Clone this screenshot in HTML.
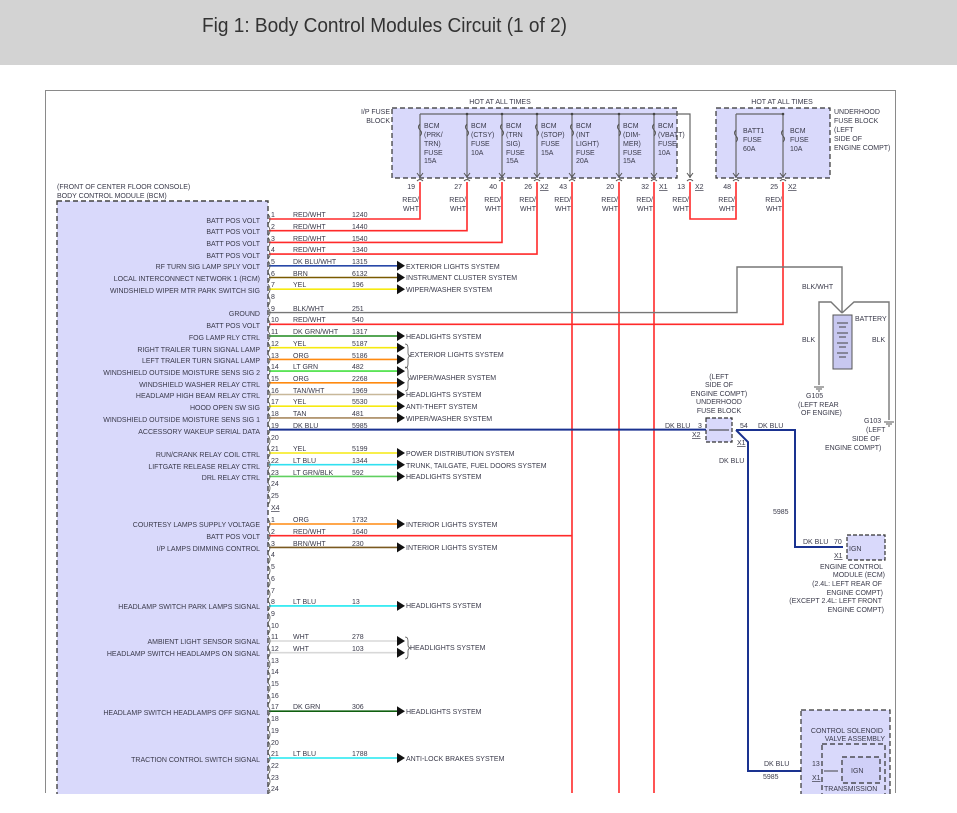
<!DOCTYPE html>
<html><head><meta charset="utf-8"><style>
html,body{margin:0;padding:0;background:#fff;width:957px;height:813px;overflow:hidden}
svg{display:block}
text{font-family:"Liberation Sans",sans-serif;font-size:7px;fill:#3a3a4a}
.l{text-anchor:end}
</style></head><body>
<svg width="957" height="813" viewBox="0 0 957 813" xmlns="http://www.w3.org/2000/svg">
<rect x="0" y="0" width="957" height="65" fill="#d3d3d3"/>
<text x="202" y="32" textLength="365" lengthAdjust="spacingAndGlyphs" style="font-size:20.5px;fill:#333">Fig 1: Body Control Modules Circuit (1 of 2)</text>
<path d="M45.5,793 V90.5 H895.5 V793" fill="none" stroke="#8a8a8a" stroke-width="1"/>
<rect x="57" y="201" width="211" height="595" fill="#d9d9fb" stroke="#444" stroke-width="1.4" stroke-dasharray="5,3"/>
<text x="57" y="189">(FRONT OF CENTER FLOOR CONSOLE)</text>
<text x="57" y="198">BODY CONTROL MODULE (BCM)</text>
<rect x="392" y="108" width="285" height="70" fill="#d9d9fb" stroke="#333" stroke-width="1.2" stroke-dasharray="5,3"/>
<rect x="716" y="108" width="114" height="70" fill="#d9d9fb" stroke="#333" stroke-width="1.2" stroke-dasharray="5,3"/>
<text x="500" y="104" text-anchor="middle">HOT AT ALL TIMES</text>
<text x="782" y="104" text-anchor="middle">HOT AT ALL TIMES</text>
<text class="l" x="390" y="114">I/P FUSE</text><text class="l" x="390" y="123">BLOCK</text>
<text x="834" y="114">UNDERHOOD</text><text x="834" y="123">FUSE BLOCK</text><text x="834" y="132">(LEFT</text><text x="834" y="141">SIDE OF</text><text x="834" y="150">ENGINE COMPT)</text>
<g fill="none" stroke="#666" stroke-width="1.2">
<path d="M420,114 H690 V178"/><path d="M420,114V178M467,114V178M502,114V178M537,114V178M572,114V178M619,114V178M654,114V178"/>
<path d="M736,114 H783 M736,114V178 M783,114V178"/>
</g>
<g fill="#444"><circle cx="467" cy="114" r="1.3"/><circle cx="502" cy="114" r="1.3"/><circle cx="537" cy="114" r="1.3"/><circle cx="572" cy="114" r="1.3"/><circle cx="619" cy="114" r="1.3"/><circle cx="654" cy="114" r="1.3"/><circle cx="783" cy="114" r="1.3"/></g>
<g fill="none" stroke="#555" stroke-width="1">
<path d="M420,124 q-3,3 0,6 q3,3 0,6 M467,124 q-3,3 0,6 q3,3 0,6 M502,124 q-3,3 0,6 q3,3 0,6 M537,124 q-3,3 0,6 q3,3 0,6 M572,124 q-3,3 0,6 q3,3 0,6 M619,124 q-3,3 0,6 q3,3 0,6 M654,124 q-3,3 0,6 q3,3 0,6 M736,130 q-3,3 0,6 q3,3 0,6 M783,130 q-3,3 0,6 q3,3 0,6"/>
<path d="M417,173l3,4 3,-4M464,173l3,4 3,-4M499,173l3,4 3,-4M534,173l3,4 3,-4M569,173l3,4 3,-4M616,173l3,4 3,-4M651,173l3,4 3,-4M687,173l3,4 3,-4M733,173l3,4 3,-4M780,173l3,4 3,-4"/>
<path d="M417,181q3,-3 6,0M464,181q3,-3 6,0M499,181q3,-3 6,0M534,181q3,-3 6,0M569,181q3,-3 6,0M616,181q3,-3 6,0M651,181q3,-3 6,0M687,181q3,-3 6,0M733,181q3,-3 6,0M780,181q3,-3 6,0"/>
</g>
<g>
<text x="424" y="128">BCM</text><text x="424" y="137">(PRK/</text><text x="424" y="146">TRN)</text><text x="424" y="155">FUSE</text><text x="424" y="163">15A</text>
<text x="471" y="128">BCM</text><text x="471" y="137">(CTSY)</text><text x="471" y="146">FUSE</text><text x="471" y="155">10A</text>
<text x="506" y="128">BCM</text><text x="506" y="137">(TRN</text><text x="506" y="146">SIG)</text><text x="506" y="155">FUSE</text><text x="506" y="163">15A</text>
<text x="541" y="128">BCM</text><text x="541" y="137">(STOP)</text><text x="541" y="146">FUSE</text><text x="541" y="155">15A</text>
<text x="576" y="128">BCM</text><text x="576" y="137">(INT</text><text x="576" y="146">LIGHT)</text><text x="576" y="155">FUSE</text><text x="576" y="163">20A</text>
<text x="623" y="128">BCM</text><text x="623" y="137">(DIM-</text><text x="623" y="146">MER)</text><text x="623" y="155">FUSE</text><text x="623" y="163">15A</text>
<text x="658" y="128">BCM</text><text x="658" y="137">(VBATT)</text><text x="658" y="146">FUSE</text><text x="658" y="155">10A</text>
<text x="743" y="133">BATT1</text><text x="743" y="142">FUSE</text><text x="743" y="151">60A</text>
<text x="790" y="133">BCM</text><text x="790" y="142">FUSE</text><text x="790" y="151">10A</text>
</g>
<g>
<text class="l" x="415" y="189">19</text><text class="l" x="462" y="189">27</text><text class="l" x="497" y="189">40</text><text class="l" x="532" y="189">26</text><text class="l" x="567" y="189">43</text><text class="l" x="614" y="189">20</text><text class="l" x="649" y="189">32</text><text class="l" x="685" y="189">13</text><text class="l" x="731" y="189">48</text><text class="l" x="778" y="189">25</text>
</g>
<g><text x="540" y="189" text-decoration="underline">X2</text><text x="659" y="189" text-decoration="underline">X1</text><text x="695" y="189" text-decoration="underline">X2</text><text x="788" y="189" text-decoration="underline">X2</text></g>
<g>
<text class="l" x="419" y="202">RED/</text><text class="l" x="419" y="211">WHT</text>
<text class="l" x="466" y="202">RED/</text><text class="l" x="466" y="211">WHT</text>
<text class="l" x="501" y="202">RED/</text><text class="l" x="501" y="211">WHT</text>
<text class="l" x="536" y="202">RED/</text><text class="l" x="536" y="211">WHT</text>
<text class="l" x="571" y="202">RED/</text><text class="l" x="571" y="211">WHT</text>
<text class="l" x="618" y="202">RED/</text><text class="l" x="618" y="211">WHT</text>
<text class="l" x="653" y="202">RED/</text><text class="l" x="653" y="211">WHT</text>
<text class="l" x="689" y="202">RED/</text><text class="l" x="689" y="211">WHT</text>
<text class="l" x="735" y="202">RED/</text><text class="l" x="735" y="211">WHT</text>
<text class="l" x="782" y="202">RED/</text><text class="l" x="782" y="211">WHT</text>
</g>
<g fill="none" stroke="#ff2a2a" stroke-width="1.6">
<path d="M269,219 H420 V182"/><path d="M269,230.7 H467 V182"/><path d="M269,242.4 H502 V182"/><path d="M269,254.1 H537 V182"/>
<path d="M572,182 V793"/><path d="M619,182 V793"/><path d="M654,182 V793"/>
<path d="M690,182 V219 H736 V182"/><path d="M269,324.3 H783 V182"/>
<path d="M269,535.7 H572"/>
</g>
<g fill="none" stroke="#777" stroke-width="1.4">
<path d="M269,312.6 H737 V267 H842 V313"/>
<path d="M842,313 L831,302 H819 V385"/><path d="M842,313 L854,302 H889 V420"/>
</g>
<text x="802" y="289">BLK/WHT</text><text x="802" y="342">BLK</text><text x="872" y="342">BLK</text><text x="855" y="321">BATTERY</text>
<rect x="833" y="315" width="19" height="54" fill="#c8c8f0" stroke="#555" stroke-width="1"/>
<g stroke="#444" stroke-width="1"><path d="M837,323h11M839,327h7M837,333h11M839,337h7M837,343h11M839,347h7M837,353h11M839,357h7"/></g>
<path d="M814,387h10M816,389h6M818,391h2" stroke="#555"/><path d="M884,422h10M886,424h6M888,426h2" stroke="#555"/>
<text x="806" y="398">G105</text><text x="798" y="407">(LEFT REAR</text><text x="801" y="415">OF ENGINE)</text>
<text x="864" y="423">G103</text><text x="866" y="432">(LEFT</text><text x="852" y="441">SIDE OF</text><text x="825" y="450">ENGINE COMPT)</text>
<rect x="706" y="418" width="26" height="24" fill="#d9d9fb" stroke="#333" stroke-width="1.2" stroke-dasharray="4,2"/>
<path d="M709,430H729" stroke="#333"/>
<g text-anchor="middle"><text x="719" y="379">(LEFT</text><text x="719" y="387">SIDE OF</text><text x="719" y="396">ENGINE COMPT)</text><text x="719" y="404">UNDERHOOD</text><text x="719" y="413">FUSE BLOCK</text></g>
<g fill="none" stroke="#1a3290" stroke-width="2">
<path d="M269,429.6 H706"/><path d="M736,430 H795 V547 H843"/><path d="M736,430 L748,442 V771 H818"/>
</g>
<text x="665" y="428">DK BLU</text><text x="698" y="428">3</text><text x="692" y="437" text-decoration="underline">X2</text>
<text x="740" y="428">54</text><text x="758" y="428">DK BLU</text><text x="737" y="445" text-decoration="underline">X1</text>
<text x="719" y="463">DK BLU</text><text x="773" y="514">5985</text>
<rect x="847" y="535" width="38" height="25" fill="#d9d9fb" stroke="#333" stroke-width="1.2" stroke-dasharray="4,2"/>
<text x="803" y="544">DK BLU</text><text x="834" y="544">70</text><text x="834" y="558" text-decoration="underline">X1</text><text x="849" y="551">IGN</text>
<g><text class="l" x="883" y="569">ENGINE CONTROL</text><text class="l" x="885" y="577">MODULE (ECM)</text><text class="l" x="882" y="586">(2.4L: LEFT REAR OF</text><text class="l" x="883" y="595">ENGINE COMPT)</text><text class="l" x="882" y="603">(EXCEPT 2.4L: LEFT FRONT</text><text class="l" x="884" y="612">ENGINE COMPT)</text></g>
<rect x="801" y="710" width="89" height="90" fill="#d9d9fb" stroke="#333" stroke-width="1.2" stroke-dasharray="5,3"/>
<rect x="822" y="744" width="63" height="60" fill="#d9d9fb" stroke="#333" stroke-width="1.2" stroke-dasharray="5,3"/>
<rect x="842" y="757" width="38" height="26" fill="#d0d0f8" stroke="#333" stroke-width="1.2" stroke-dasharray="5,3"/>
<path d="M824,771 H838" stroke="#444"/>
<text class="l" x="883" y="733">CONTROL SOLENOID</text><text class="l" x="885" y="741">VALVE ASSEMBLY</text>
<text x="851" y="773">IGN</text><text x="812" y="766">13</text><text x="812" y="780" text-decoration="underline">X1</text>
<text x="764" y="766">DK BLU</text><text x="763" y="779">5985</text><text x="824" y="791">TRANSMISSION</text>
<g fill="none" stroke-width="1.6">
<path d="M269,265.8H398" stroke="#2848a8"/>
<path d="M269,277.5H398" stroke="#7a5a00"/>
<path d="M269,289.2H398" stroke="#f6ea10"/>
<path d="M269,336H398" stroke="#1f8a1f"/>
<path d="M269,347.7H398" stroke="#f6ea10"/>
<path d="M269,359.4H398" stroke="#ff8a10"/>
<path d="M269,371.1H398" stroke="#44e040"/>
<path d="M269,382.8H398" stroke="#ff8a10"/>
<path d="M269,394.5H398" stroke="#c8b89a"/>
<path d="M269,406.2H398" stroke="#f6ea10"/>
<path d="M269,417.9H398" stroke="#a88a60"/>
<path d="M269,453H398" stroke="#f6ea10"/>
<path d="M269,464.7H398" stroke="#30e0f0"/>
<path d="M269,476.4H398" stroke="#60d060"/>
<path d="M269,524H398" stroke="#ff8a10"/>
<path d="M269,547.4H398" stroke="#7a5a20"/>
<path d="M269,605.9H398" stroke="#20e8f0"/>
<path d="M269,641H398" stroke="#d8d8d8"/>
<path d="M269,652.7H398" stroke="#d8d8d8"/>
<path d="M269,711.2H398" stroke="#106010"/>
<path d="M269,758H398" stroke="#20e8f0"/>
</g>
<g fill="#111">
<path d="M397,260.8l8,5l-8,5z"/><path d="M397,272.5l8,5l-8,5z"/><path d="M397,284.2l8,5l-8,5z"/><path d="M397,331l8,5l-8,5z"/><path d="M397,342.7l8,5l-8,5z"/><path d="M397,354.4l8,5l-8,5z"/><path d="M397,366.1l8,5l-8,5z"/><path d="M397,377.8l8,5l-8,5z"/><path d="M397,389.5l8,5l-8,5z"/><path d="M397,401.2l8,5l-8,5z"/><path d="M397,412.9l8,5l-8,5z"/><path d="M397,448l8,5l-8,5z"/><path d="M397,459.7l8,5l-8,5z"/><path d="M397,471.4l8,5l-8,5z"/><path d="M397,519l8,5l-8,5z"/><path d="M397,542.4l8,5l-8,5z"/><path d="M397,600.9l8,5l-8,5z"/><path d="M397,636l8,5l-8,5z"/><path d="M397,647.7l8,5l-8,5z"/><path d="M397,706.2l8,5l-8,5z"/><path d="M397,753l8,5l-8,5z"/>
</g>
<g fill="none" stroke="#555" stroke-width="0.8">
<path d="M405,344 q3,0 3,4 v5 q0,3 3,3 q-3,0 -3,3 v5 q0,4 -3,4"/>
<path d="M405,367 q3,0 3,4 v5 q0,3 3,3 q-3,0 -3,3 v5 q0,4 -3,4"/>
<path d="M405,637 q3,0 3,4 v4 q0,3 3,3 q-3,0 -3,3 v4 q0,4 -3,4"/>
</g>
<g>
<text x="406" y="269">EXTERIOR LIGHTS SYSTEM</text><text x="406" y="280">INSTRUMENT CLUSTER SYSTEM</text><text x="406" y="292">WIPER/WASHER SYSTEM</text>
<text x="406" y="339">HEADLIGHTS SYSTEM</text><text x="410" y="357">EXTERIOR LIGHTS SYSTEM</text><text x="410" y="380">WIPER/WASHER SYSTEM</text>
<text x="406" y="397">HEADLIGHTS SYSTEM</text><text x="406" y="409">ANTI-THEFT SYSTEM</text><text x="406" y="421">WIPER/WASHER SYSTEM</text>
<text x="406" y="456">POWER DISTRIBUTION SYSTEM</text><text x="406" y="468">TRUNK, TAILGATE, FUEL DOORS SYSTEM</text><text x="406" y="479">HEADLIGHTS SYSTEM</text>
<text x="406" y="527">INTERIOR LIGHTS SYSTEM</text><text x="406" y="550">INTERIOR LIGHTS SYSTEM</text>
<text x="406" y="608">HEADLIGHTS SYSTEM</text><text x="410" y="650">HEADLIGHTS SYSTEM</text><text x="406" y="714">HEADLIGHTS SYSTEM</text><text x="406" y="761">ANTI-LOCK BRAKES SYSTEM</text>
</g>
<g>
<text class="l" x="260" y="223">BATT POS VOLT</text><text class="l" x="260" y="234">BATT POS VOLT</text><text class="l" x="260" y="246">BATT POS VOLT</text><text class="l" x="260" y="258">BATT POS VOLT</text>
<text class="l" x="260" y="269">RF TURN SIG LAMP SPLY VOLT</text><text class="l" x="260" y="281">LOCAL INTERCONNECT NETWORK 1 (RCM)</text><text class="l" x="260" y="293">WINDSHIELD WIPER MTR PARK SWITCH SIG</text>
<text class="l" x="260" y="316">GROUND</text><text class="l" x="260" y="328">BATT POS VOLT</text><text class="l" x="260" y="340">FOG LAMP RLY CTRL</text>
<text class="l" x="260" y="352">RIGHT TRAILER TURN SIGNAL LAMP</text><text class="l" x="260" y="363">LEFT TRAILER TURN SIGNAL LAMP</text><text class="l" x="260" y="375">WINDSHIELD OUTSIDE MOISTURE SENS SIG 2</text>
<text class="l" x="260" y="387">WINDSHIELD WASHER RELAY CTRL</text><text class="l" x="260" y="398">HEADLAMP HIGH BEAM RELAY CTRL</text><text class="l" x="260" y="410">HOOD OPEN SW SIG</text>
<text class="l" x="260" y="422">WINDSHIELD OUTSIDE MOISTURE SENS SIG 1</text><text class="l" x="260" y="434">ACCESSORY WAKEUP SERIAL DATA</text>
<text class="l" x="260" y="457">RUN/CRANK RELAY COIL CTRL</text><text class="l" x="260" y="469">LIFTGATE RELEASE RELAY CTRL</text><text class="l" x="260" y="480">DRL RELAY CTRL</text>
<text class="l" x="260" y="527">COURTESY LAMPS SUPPLY VOLTAGE</text><text class="l" x="260" y="539">BATT POS VOLT</text><text class="l" x="260" y="551">I/P LAMPS DIMMING CONTROL</text>
<text class="l" x="260" y="609">HEADLAMP SWITCH PARK LAMPS SIGNAL</text><text class="l" x="260" y="644">AMBIENT LIGHT SENSOR SIGNAL</text><text class="l" x="260" y="656">HEADLAMP SWITCH HEADLAMPS ON SIGNAL</text>
<text class="l" x="260" y="715">HEADLAMP SWITCH HEADLAMPS OFF SIGNAL</text><text class="l" x="260" y="762">TRACTION CONTROL SWITCH SIGNAL</text>
</g>
<g>
<text x="293" y="217">RED/WHT</text><text x="352" y="217">1240</text>
<text x="293" y="229">RED/WHT</text><text x="352" y="229">1440</text>
<text x="293" y="241">RED/WHT</text><text x="352" y="241">1540</text>
<text x="293" y="252">RED/WHT</text><text x="352" y="252">1340</text>
<text x="293" y="264">DK BLU/WHT</text><text x="352" y="264">1315</text>
<text x="293" y="276">BRN</text><text x="352" y="276">6132</text>
<text x="293" y="287">YEL</text><text x="352" y="287">196</text>
<text x="293" y="311">BLK/WHT</text><text x="352" y="311">251</text>
<text x="293" y="322">RED/WHT</text><text x="352" y="322">540</text>
<text x="293" y="334">DK GRN/WHT</text><text x="352" y="334">1317</text>
<text x="293" y="346">YEL</text><text x="352" y="346">5187</text>
<text x="293" y="358">ORG</text><text x="352" y="358">5186</text>
<text x="293" y="369">LT GRN</text><text x="352" y="369">482</text>
<text x="293" y="381">ORG</text><text x="352" y="381">2268</text>
<text x="293" y="393">TAN/WHT</text><text x="352" y="393">1969</text>
<text x="293" y="404">YEL</text><text x="352" y="404">5530</text>
<text x="293" y="416">TAN</text><text x="352" y="416">481</text>
<text x="293" y="428">DK BLU</text><text x="352" y="428">5985</text>
<text x="293" y="451">YEL</text><text x="352" y="451">5199</text>
<text x="293" y="463">LT BLU</text><text x="352" y="463">1344</text>
<text x="293" y="475">LT GRN/BLK</text><text x="352" y="475">592</text>
<text x="293" y="522">ORG</text><text x="352" y="522">1732</text>
<text x="293" y="534">RED/WHT</text><text x="352" y="534">1640</text>
<text x="293" y="546">BRN/WHT</text><text x="352" y="546">230</text>
<text x="293" y="604">LT BLU</text><text x="352" y="604">13</text>
<text x="293" y="639">WHT</text><text x="352" y="639">278</text>
<text x="293" y="651">WHT</text><text x="352" y="651">103</text>
<text x="293" y="709">DK GRN</text><text x="352" y="709">306</text>
<text x="293" y="756">LT BLU</text><text x="352" y="756">1788</text>
</g>
<g style="font-size:6.5px">
<text x="271" y="217">1</text><text x="271" y="229">2</text><text x="271" y="241">3</text><text x="271" y="252">4</text><text x="271" y="264">5</text><text x="271" y="276">6</text><text x="271" y="287">7</text><text x="271" y="299">8</text><text x="271" y="311">9</text><text x="271" y="322">10</text><text x="271" y="334">11</text><text x="271" y="346">12</text><text x="271" y="358">13</text><text x="271" y="369">14</text><text x="271" y="381">15</text><text x="271" y="393">16</text><text x="271" y="404">17</text><text x="271" y="416">18</text><text x="271" y="428">19</text><text x="271" y="440">20</text><text x="271" y="451">21</text><text x="271" y="463">22</text><text x="271" y="475">23</text><text x="271" y="486">24</text><text x="271" y="498">25</text>
<text x="271" y="510" text-decoration="underline">X4</text>
<text x="271" y="522">1</text><text x="271" y="534">2</text><text x="271" y="546">3</text><text x="271" y="557">4</text><text x="271" y="569">5</text><text x="271" y="581">6</text><text x="271" y="593">7</text><text x="271" y="604">8</text><text x="271" y="616">9</text><text x="271" y="628">10</text><text x="271" y="639">11</text><text x="271" y="651">12</text><text x="271" y="663">13</text><text x="271" y="674">14</text><text x="271" y="686">15</text><text x="271" y="698">16</text><text x="271" y="709">17</text><text x="271" y="721">18</text><text x="271" y="733">19</text><text x="271" y="745">20</text><text x="271" y="756">21</text><text x="271" y="768">22</text><text x="271" y="780">23</text><text x="271" y="791">24</text>
</g>
<g fill="none" stroke="#555" stroke-width="0.8">
<path d="M268,214q4,5 0,10M268,225.7q4,5 0,10M268,237.4q4,5 0,10M268,249.1q4,5 0,10M268,260.8q4,5 0,10M268,272.5q4,5 0,10M268,284.2q4,5 0,10M268,295.9q4,5 0,10M268,307.6q4,5 0,10M268,319.3q4,5 0,10M268,331q4,5 0,10M268,342.7q4,5 0,10M268,354.4q4,5 0,10M268,366.1q4,5 0,10M268,377.8q4,5 0,10M268,389.5q4,5 0,10M268,401.2q4,5 0,10M268,412.9q4,5 0,10M268,424.6q4,5 0,10M268,436.3q4,5 0,10M268,448q4,5 0,10M268,459.7q4,5 0,10M268,471.4q4,5 0,10M268,483.1q4,5 0,10M268,494.8q4,5 0,10"/>
<path d="M268,519q4,5 0,10M268,530.7q4,5 0,10M268,542.4q4,5 0,10M268,554.1q4,5 0,10M268,565.8q4,5 0,10M268,577.5q4,5 0,10M268,589.2q4,5 0,10M268,600.9q4,5 0,10M268,612.6q4,5 0,10M268,624.3q4,5 0,10M268,636q4,5 0,10M268,647.7q4,5 0,10M268,659.4q4,5 0,10M268,671.1q4,5 0,10M268,682.8q4,5 0,10M268,694.5q4,5 0,10M268,706.2q4,5 0,10M268,717.9q4,5 0,10M268,729.6q4,5 0,10M268,741.3q4,5 0,10M268,753q4,5 0,10M268,764.7q4,5 0,10M268,776.4q4,5 0,10M268,788.1q4,5 0,5"/>
</g>
<rect x="0" y="794" width="957" height="19" fill="#fff"/>
</svg>
</body></html>
